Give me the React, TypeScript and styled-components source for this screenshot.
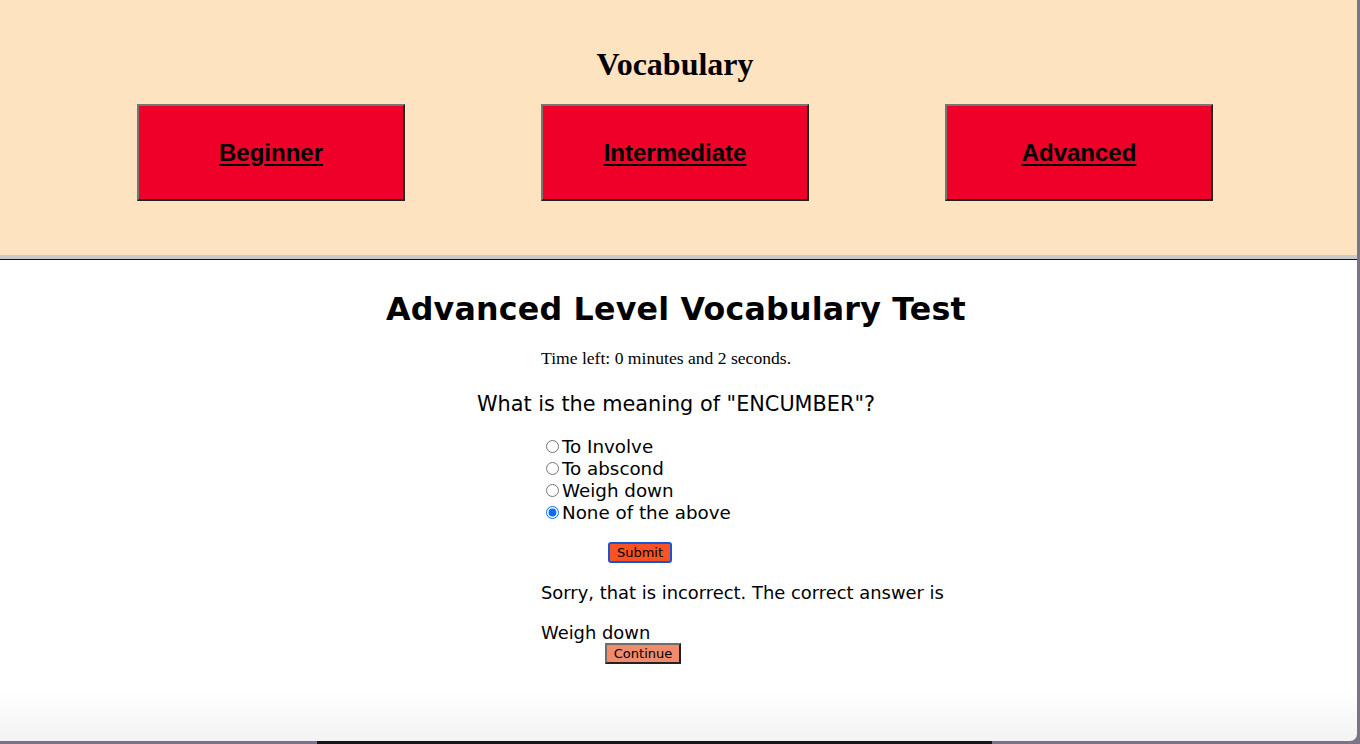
import React from "react";
import styled, { createGlobalStyle } from "styled-components";

const Global = createGlobalStyle`
  html, body { margin: 0; padding: 0; }
  body {
    background: #7d7386;
    width: 1360px;
    height: 744px;
    overflow: hidden;
    font-family: "Liberation Serif", serif;
  }
`;

const Screen = styled.div`
  width: 1360px;
  height: 744px;
  display: flex;
  flex-direction: column;
`;

const Window = styled.div`
  width: 1357px;
  height: 741px;
  background: linear-gradient(to bottom, #ffffff 0, #ffffff 690px, #f3f3f3 741px);
  border-bottom-right-radius: 7px;
  overflow: hidden;
  display: flex;
  flex-direction: column;
`;

const DockStrip = styled.div`
  height: 3px;
  margin-left: 317px;
  width: 675px;
  background: #16161a;
`;

const Header = styled.header`
  background: #fee3c1;
  padding: 46px 0 54px 137px;
  border-bottom: 4px solid #c9c9c9;
  display: flex;
  flex-direction: column;
`;

const Divider = styled.div`
  height: 1px;
  background: #111;
`;

const SiteTitle = styled.h2`
  margin: 0 0 22px;
  width: 1076px;
  text-align: center;
  font-family: "Liberation Serif", serif;
  font-weight: bold;
  font-size: 32px;
  line-height: 36px;
  color: #000;
`;

const LevelRow = styled.nav`
  display: flex;
  gap: 136px;
`;

const LevelButton = styled.a`
  box-sizing: border-box;
  width: 268px;
  height: 97px;
  background: #ee0028;
  border: 2px solid;
  border-color: #767676 #222 #222 #767676;
  display: flex;
  align-items: center;
  justify-content: center;
  font-family: "Liberation Sans", Arial, sans-serif;
  font-weight: bold;
  font-size: 24px;
  color: #000;
  text-decoration: underline;
  text-decoration-thickness: 2px;
  text-underline-offset: 3px;
  cursor: pointer;
`;

const Main = styled.main`
  display: flex;
  flex-direction: column;
  padding: 29px 5px 0 0;
`;

const TestTitle = styled.h1`
  margin: 0;
  text-align: center;
  font-family: "DejaVu Sans", Verdana, sans-serif;
  font-weight: bold;
  font-size: 31.7px;
  line-height: 40px;
  color: #000;
  letter-spacing: 0.2px;
`;

const Column = styled.div`
  margin-left: 541px;
  display: flex;
  flex-direction: column;
  align-items: flex-start;
`;

const Timer = styled.p`
  margin: 19px 0 0 541px;
  font-family: "Liberation Serif", serif;
  font-size: 17.6px;
  line-height: 20px;
  color: #000;
`;

const Question = styled.p`
  margin: 24px 0 0;
  text-align: center;
  font-family: "DejaVu Sans", Verdana, sans-serif;
  font-size: 20.8px;
  line-height: 24px;
  color: #000;
`;

const Options = styled.form`
  margin-top: 19px;
  display: flex;
  flex-direction: column;
`;

const Option = styled.label`
  display: flex;
  align-items: center;
  height: 22px;
  font-family: "DejaVu Sans", Verdana, sans-serif;
  font-size: 18.3px;
  color: #000;
  white-space: nowrap;
`;

const Radio = styled.input`
  width: 13px;
  height: 13px;
  margin: 1px 3px 0 5px;
  accent-color: #0a6cff;
`;

const ActionRow = styled.div<{ $top: number }>`
  margin-top: ${(p) => p.$top}px;
  display: flex;
`;

const ActionButton = styled.button<{ $tone: "submit" | "continue"; $offset: number }>`
  margin-left: ${(p) => p.$offset}px;
  height: 21px;
  padding: 0 4px;
  font-family: "DejaVu Sans", Verdana, sans-serif;
  font-size: 13px;
  line-height: 16px;
  color: #000;
  cursor: pointer;
  ${(p) =>
    p.$tone === "submit"
      ? `
    background: #fb5224;
    border: 2px solid #1556d8;
    border-radius: 3px;
    width: 64px;
  `
      : `
    background: #f08b6c;
    border: 2px solid;
    border-color: #6e6e6e #222 #222 #6e6e6e;
    border-radius: 0;
    width: 76px;
  `}
`;

const Feedback = styled.p<{ $top: number }>`
  margin: ${(p) => p.$top}px 0 0;
  font-family: "DejaVu Sans", Verdana, sans-serif;
  font-size: 17.9px;
  line-height: 22px;
  color: #000;
  white-space: nowrap;
`;

const options = ["To Involve", "To abscond", "Weigh down", "None of the above"];

export default function App() {
  return (
    <Screen>
      <Global />
      <Window>
        <Header>
          <SiteTitle>Vocabulary</SiteTitle>
          <LevelRow>
            <LevelButton>Beginner</LevelButton>
            <LevelButton>Intermediate</LevelButton>
            <LevelButton>Advanced</LevelButton>
          </LevelRow>
        </Header>
        <Divider />
        <Main>
          <TestTitle>Advanced Level Vocabulary Test</TestTitle>
          <Timer>Time left: 0 minutes and 2 seconds.</Timer>
          <Question>What is the meaning of "ENCUMBER"?</Question>
          <Column>
            <Options>
              {options.map((o) => (
                <Option key={o}>
                  <Radio
                    type="radio"
                    name="answer"
                    defaultChecked={o === "None of the above"}
                  />
                  {o}
                </Option>
              ))}
            </Options>
            <ActionRow $top={19}>
              <ActionButton $tone="submit" $offset={67}>Submit</ActionButton>
            </ActionRow>
            <Feedback $top={19}>Sorry, that is incorrect. The correct answer is</Feedback>
            <Feedback $top={18}>Weigh down</Feedback>
            <ActionRow $top={-1}>
              <ActionButton $tone="continue" $offset={64}>Continue</ActionButton>
            </ActionRow>
          </Column>
        </Main>
      </Window>
      <DockStrip />
    </Screen>
  );
}
